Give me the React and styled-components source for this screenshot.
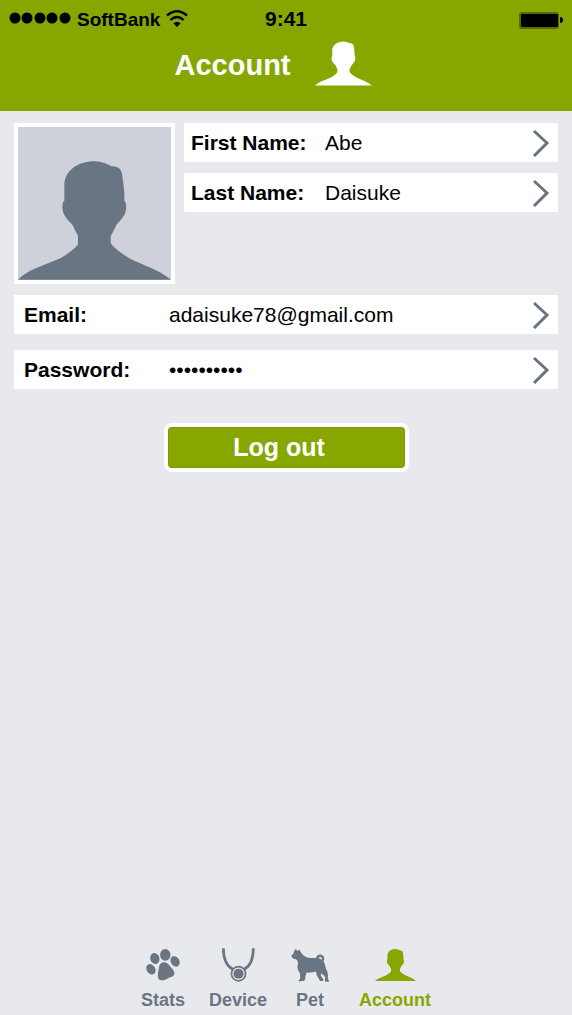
import React from "react";
import styled, { createGlobalStyle, css } from "styled-components";

const color = {
  green: "#88a600",
  page: "#e8e9ed",
  slate: "#697582",
  photo: "#ced1d9",
};

const GlobalStyle = createGlobalStyle`
  *, *::before, *::after { box-sizing: border-box; }
  body {
    margin: 0;
    background: ${color.page};
    color: #000;
    font-family: "Liberation Sans", Arial, sans-serif;
  }
`;

const Page = styled.div`
  display: flex;
  flex-direction: column;
  min-height: 100vh;
  background: ${color.page};
`;

const Header = styled.header`
  background: ${color.green};
  padding-bottom: 24px;
`;

const StatusBar = styled.div`
  display: grid;
  grid-template-columns: 1fr auto 1fr;
  align-items: center;
  height: 37px;
  padding: 0 9px;
  font-weight: 700;
`;

const Carrier = styled.div`
  display: flex;
  align-items: center;
  font-size: 19px;
  line-height: 24px;
`;

const CarrierName = styled.span`
  margin: 3px 6px 0;
`;

const Clock = styled.time`
  font-size: 21px;
  line-height: 24px;
`;

const Battery = styled.svg`
  justify-self: end;
  margin-top: 3px;
`;

const TitleRow = styled.div`
  display: flex;
  justify-content: center;
  align-items: flex-start;
  gap: 24px;
  padding: 4px 26px 0 0;
  color: #fff;
`;

const Title = styled.h1`
  margin: 0;
  font-size: 29px;
  line-height: 48px;
  font-weight: 700;
  height: 46px;
`;

const PersonSvg = styled.svg`
  display: block;
  fill: currentColor;
`;

const Main = styled.main`
  flex: 1;
  display: flex;
  flex-direction: column;
  padding: 12px 14px;
`;

const Profile = styled.section`
  display: flex;
  align-items: flex-start;
  gap: 9px;
  margin-bottom: 11px;
`;

const Photo = styled.div`
  flex: none;
  width: 161px;
  height: 161px;
  display: flex;
  align-items: flex-end;
  border: 4px solid #fff;
  background: ${color.photo};
  color: ${color.slate};
`;

const NameFields = styled.div`
  flex: 1;
  min-width: 0;
  display: flex;
  flex-direction: column;
  gap: 11px;
`;

const LoginFields = styled.section`
  display: flex;
  flex-direction: column;
  gap: 16px;
`;

const FieldRow = styled.a`
  display: grid;
  grid-template-columns: ${(p) => (p.$wide ? "145px" : "134px")} 1fr auto;
  align-items: center;
  height: 39px;
  padding: 0 8px 0 ${(p) => (p.$wide ? 10 : 7)}px;
  background: #fff;
  color: #000;
  text-decoration: none;
  font-size: 21px;
  line-height: 26px;
`;

const FieldLabel = styled.span`
  font-weight: 700;
`;

const Chevron = styled.svg`
  display: block;
  fill: none;
  stroke: ${color.slate};
  stroke-width: 3;
`;

const LogoutButton = styled.button`
  align-self: center;
  width: 245px;
  height: 49px;
  margin-top: 34px;
  padding: 0 14px 2px 0;
  border: 4px solid #fff;
  border-radius: 8px;
  background: ${color.green};
  box-shadow: inset 0 0 0 1px #7c9a00;
  color: #fff;
  font: 700 25px/30px "Liberation Sans", Arial, sans-serif;
  cursor: pointer;
`;

const TabBar = styled.nav`
  display: flex;
  justify-content: center;
  padding-bottom: 5px;
`;

const Tab = styled.a`
  display: flex;
  flex-direction: column;
  align-items: center;
  gap: 8px;
  padding: 0 12px;
  color: ${color.slate};
  font-size: 18px;
  line-height: 20px;
  font-weight: 700;
  text-decoration: none;
  ${(p) => p.$active && css`
    margin-left: 6px;
    color: ${color.green};
  `}
`;

const TabIcon = styled.span`
  display: flex;
  align-items: center;
  height: 34px;
`;

const Person = ({ width, height }) => (
  <PersonSvg width={width} height={height} viewBox="54 152 462 358" aria-hidden="true">
    <path d="M54 510C82 480 130 467 175 448C200 437 225 415 235 404V376C226 362 223 350 217 342C205 329 188 315 188 290C188 280 190 273 194 271V225C194 180 235 152 285 152C310 152 325 162 336 167C360 166 369 178 370 205C374 230 376 250 375 271C380 275 381 282 381 290C381 312 368 325 352 343C345 355 342 365 334 378V400C345 415 365 430 390 445C430 466 480 479 516 510Z" />
  </PersonSvg>
);

const Paw = () => (
  <svg width="34" height="32" viewBox="36 26 102 98" fill="currentColor" aria-hidden="true">
    <ellipse cx="50" cy="88" rx="13" ry="17" transform="rotate(-35 50 88)" />
    <ellipse cx="62" cy="55" rx="14" ry="17" transform="rotate(-20 62 55)" />
    <ellipse cx="94" cy="44" rx="16" ry="18" />
    <ellipse cx="124" cy="64" rx="13" ry="17" transform="rotate(-30 124 64)" />
    <path d="M86 67C96 65 103 71 109 79C115 87 123 93 122 102C121 111 111 112 103 115C94 123 80 125 74 119C69 111 72 98 74 88C75 78 77 69 86 67Z" />
  </svg>
);

const Collar = () => (
  <svg width="33" height="34" viewBox="50 30 98 100" fill="none" stroke="currentColor" aria-hidden="true">
    <path d="M54 30C54 62 65 84 83 93M143 30C143 62 133 84 115 93" strokeWidth="8" />
    <circle cx="99" cy="106" r="21" strokeWidth="5" />
    <circle cx="99" cy="106" r="15" fill="currentColor" stroke="none" />
  </svg>
);

const Dog = () => (
  <svg width="38" height="33" viewBox="30 26 112 98" fill="currentColor" aria-hidden="true">
    <path d="M30 46L37 39L39 33L43 26L48 31L54 28L59 36C63 44 70 49 78 51C88 53 100 54 110 52L124 60C130 67 132 76 133 85C139 92 140 101 139 115L142 119V123H132L130 119L131 110C128 104 124 102 119 99L118 105L126 117L125 121H116L106 104L104 93C96 95 84 97 76 96C73 102 72 110 71 118L67 121H60L53 123V119L57 114L56 98C51 92 48 84 49 76L51 66L46 57L35 54Z" />
    <circle cx="116" cy="55" r="9" fill="none" stroke="currentColor" strokeWidth="7" />
  </svg>
);

const Field = ({ id, label, value, wide, spoken }) => (
  <FieldRow href={`#${id}`} $wide={wide}>
    <FieldLabel>{label}:</FieldLabel>
    <span aria-label={spoken}>{value}</span>
    <Chevron width="18" height="28" viewBox="0 0 18 28" aria-hidden="true">
      <path d="M2 2L15 14L2 27" />
    </Chevron>
  </FieldRow>
);

const tabs = [
  { label: "Stats", icon: <Paw /> },
  { label: "Device", icon: <Collar /> },
  { label: "Pet", icon: <Dog /> },
  { label: "Account", icon: <Person width={41} height={32} />, active: true },
];

export default function App() {
  return (
    <Page>
      <GlobalStyle />
      <Header>
        <StatusBar>
          <Carrier>
            <svg width="62" height="14" viewBox="0 0 62 14" aria-hidden="true">
              {[6, 18, 31, 43, 56].map((x) => (
                <circle key={x} cx={x} cy="6" r="5.5" />
              ))}
            </svg>
            <CarrierName>SoftBank</CarrierName>
            <svg width="22" height="18" viewBox="501 28 66 54" aria-hidden="true">
              <path d="M504 45Q534 19 564 45M514 58Q534 40 554 58" fill="none" stroke="#000" strokeWidth="7" />
              <path d="M523 68Q534 58 545 68L534 79Z" />
            </svg>
          </Carrier>
          <Clock>9:41</Clock>
          <Battery width="44" height="17" viewBox="0 0 44 17" aria-hidden="true">
            <rect width="40" height="17" rx="3" opacity="0.35" />
            <rect x="2" y="2" width="37" height="13" rx="1" />
            <path d="M41 5Q44 5 44 8Q44 11 41 11Z" />
          </Battery>
        </StatusBar>
        <TitleRow>
          <Title>Account</Title>
          <Person width={57} height={45} />
        </TitleRow>
      </Header>
      <Main>
        <Profile>
          <Photo role="img" aria-label="Profile photo">
            <Person width={153} height={119} />
          </Photo>
          <NameFields>
            <Field id="first-name" label="First Name" value="Abe" />
            <Field id="last-name" label="Last Name" value="Daisuke" />
          </NameFields>
        </Profile>
        <LoginFields>
          <Field id="email" label="Email" value="adaisuke78@gmail.com" wide />
          <Field id="password" label="Password" value="••••••••••" spoken="hidden" wide />
        </LoginFields>
        <LogoutButton type="button">Log out</LogoutButton>
      </Main>
      <TabBar aria-label="Main">
        {tabs.map(({ label, icon, active }) => (
          <Tab key={label} href={`#${label.toLowerCase()}`} $active={active} aria-current={active ? "page" : undefined}>
            <TabIcon>{icon}</TabIcon>
            {label}
          </Tab>
        ))}
      </TabBar>
    </Page>
  );
}
